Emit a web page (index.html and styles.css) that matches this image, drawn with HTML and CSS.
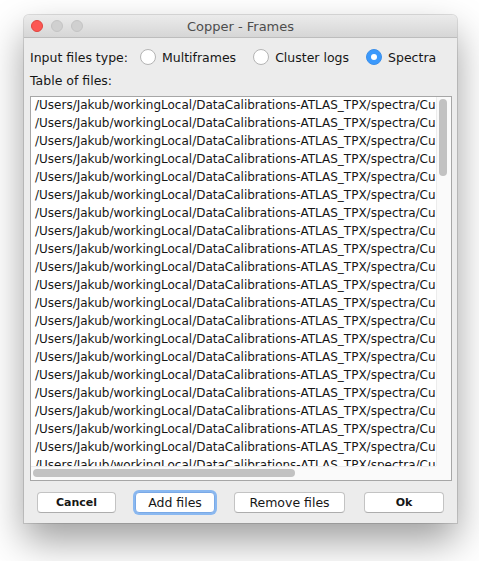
FILE: index.html
```html
<!DOCTYPE html>
<html>
<head>
<meta charset="utf-8">
<link rel="stylesheet" href="styles.css">
</head>
<body>
<div class="window">
  <div class="titlebar">
    <div class="lights">
      <span class="light red"></span>
      <span class="light gray"></span>
      <span class="light gray"></span>
    </div>
    <div class="title">Copper - Frames</div>
  </div>
  <div class="content">
    <div class="typerow">
      <span class="label">Input files type:</span>
      <label class="radio"><span class="dot"></span>Multiframes</label>
      <label class="radio"><span class="dot"></span>Cluster logs</label>
      <label class="radio"><span class="dot on"></span>Spectra</label>
    </div>
    <div class="label tablelabel">Table of files:</div>
    <div class="list">
      <div class="rows" id="rows"></div>
      <div class="vbar"><span class="vthumb"></span></div>
      <div class="hbar"><span class="hthumb"></span></div>
      <div class="corner"></div>
    </div>
    <div class="buttons">
      <button class="btn bold w79">Cancel</button>
      <button class="btn focus w80">Add files</button>
      <button class="btn w111">Remove files</button>
      <button class="btn bold w80">Ok</button>
    </div>
  </div>
</div>
<script>
  var r = document.getElementById('rows');
  for (var i = 0; i < 21; i++) {
    var d = document.createElement('div');
    d.className = 'row';
    d.textContent = '/Users/Jakub/workingLocal/DataCalibrations-ATLAS_TPX/spectra/Cu';
    r.appendChild(d);
  }
</script>
</body>
</html>
```
FILE: styles.css
```css
html, body {
  margin: 0;
  padding: 0;
  background: #ffffff;
}
body {
  width: 479px;
  height: 561px;
  overflow: hidden;
  font-family: "DejaVu Sans", "Liberation Sans", sans-serif;
  color: #161616;
}
.window {
  margin: 15px 0 0 24px;
  width: 433px;
  height: 508px;
  background: #ececec;
  border-radius: 5px 5px 0 0;
  box-shadow: 0 0 0 1px rgba(0,0,0,0.12), 0 18px 38px rgba(0,0,0,0.38);
  display: flex;
  flex-direction: column;
}
.titlebar {
  height: 22px;
  border-bottom: 1px solid #bdbdbd;
  background: linear-gradient(#ebebeb, #d6d6d6);
  border-radius: 5px 5px 0 0;
  position: relative;
  display: flex;
  align-items: center;
  justify-content: center;
}
.lights {
  position: absolute;
  left: 7px;
  top: 5px;
  display: flex;
  gap: 8px;
}
.light {
  width: 12px;
  height: 12px;
  border-radius: 50%;
  box-sizing: border-box;
}
.light.red {
  background: #fc5753;
  border: 1px solid #e0443e;
}
.light.gray {
  background: #d0d0d0;
  border: 1px solid #c4c4c4;
}
.title {
  font-size: 13px;
  color: #4d4d4d;
}
.content {
  padding: 0 5px 0 6px;
  display: flex;
  flex-direction: column;
}
.typerow {
  display: flex;
  align-items: center;
  height: 22px;
  margin-top: 8px;
  font-size: 12.5px;
  white-space: nowrap;
}
.label {
  font-size: 12.5px;
  margin-right: 12px;
  white-space: nowrap;
  flex-shrink: 0;
}
.radio {
  display: flex;
  align-items: center;
  margin-right: 17px;
  flex-shrink: 0;
  white-space: nowrap;
}
.radio:last-child {
  margin-right: 0;
}
.dot {
  width: 16px;
  height: 16px;
  box-sizing: border-box;
  border-radius: 50%;
  border: 1px solid #b4b4b4;
  background: #ffffff;
  margin-right: 6px;
  display: inline-block;
  position: relative;
  flex-shrink: 0;
}
.dot.on {
  background: #3b99fc;
  border-color: #3b8fea;
}
.dot.on::after {
  content: "";
  position: absolute;
  left: 4px;
  top: 4px;
  width: 6px;
  height: 6px;
  border-radius: 50%;
  background: #ffffff;
}
.tablelabel {
  margin-top: 3px;
  height: 20px;
  line-height: 20px;
}
.list {
  margin-top: 5px;
  width: 422px;
  height: 385px;
  box-sizing: border-box;
  border: 1px solid #a6a6a6;
  background: #ffffff;
  display: grid;
  grid-template-columns: 1fr 15px;
  grid-template-rows: 1fr 14px;
  overflow: hidden;
}
.rows {
  overflow: hidden;
  padding-left: 4px;
  font-size: 12px;
}
.row {
  height: 18px;
  line-height: 17px;
  white-space: nowrap;
}
.vbar {
  background: #fafafa;
  border-left: 1px solid #ececec;
  padding: 2px 0 0 2px;
}
.vthumb {
  display: block;
  width: 8px;
  height: 77px;
  border-radius: 4px;
  background: #c2c2c2;
}
.hbar {
  background: #fafafa;
  border-top: 1px solid #ececec;
  padding: 2px 0 0 2px;
}
.hthumb {
  display: block;
  width: 262px;
  height: 8px;
  border-radius: 4px;
  background: #c2c2c2;
}
.corner {
  background: #fafafa;
}
.buttons {
  display: flex;
  gap: 19px;
  margin-top: 11px;
  padding-left: 7px;
}
.btn {
  height: 21px;
  box-sizing: border-box;
  background: #ffffff;
  border: 1px solid #c3c3c3;
  border-bottom-color: #adadad;
  border-radius: 4px;
  font-family: "DejaVu Sans", "Liberation Sans", sans-serif;
  font-size: 12.5px;
  color: #161616;
  padding: 0;
}
.btn.bold {
  font-weight: bold;
  font-size: 11px;
}
.btn.focus {
  box-shadow: 0 0 0 2px #8ab8f0;
  border-color: #7aa9e6;
}
.w79 { width: 79px; }
.w80 { width: 80px; }
.w111 { width: 111px; }
```
